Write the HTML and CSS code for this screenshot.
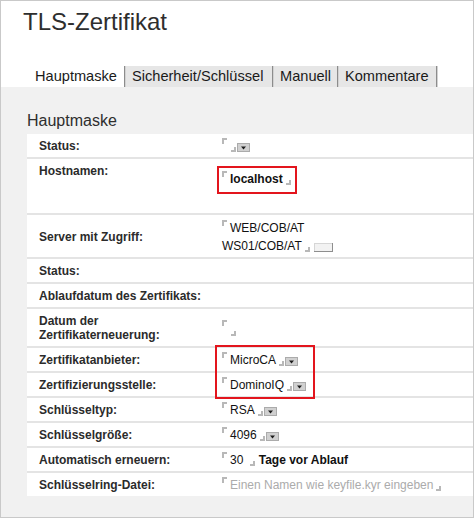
FILE: index.html
```html
<!DOCTYPE html>
<html lang="de">
<head>
<meta charset="utf-8">
<title>TLS-Zertifikat</title>
<link rel="stylesheet" href="styles.css">
</head>
<body>
<div class="window">
  <h1 class="title">TLS-Zertifikat</h1>
  <div class="tabs">
    <div class="tab tab-main active">Hauptmaske</div>
    <div class="tab tab-sec">Sicherheit/Schlüssel</div>
    <div class="tab tab-man">Manuell</div>
    <div class="tab tab-com">Kommentare</div>
  </div>
  <div class="panel">
    <h2 class="section">Hauptmaske</h2>
    <div class="form-wrap">
      <table class="form">
        <tr>
          <td class="label">Status:</td>
          <td class="value"><span class="field empty"><span class="tl"></span><span class="br"></span><svg class="dd" width="13" height="9" viewBox="0 0 13 9"><rect x="0.5" y="0.5" width="12" height="8" fill="#d0d0d0" stroke="#ababab"/><path d="M4 3.5h5l-2.5 3z" fill="#1a1a1a"/></svg></span></td>
        </tr>
        <tr class="row-host">
          <td class="label label-top">Hostnamen:</td>
          <td class="value value-host"><span class="mark"><span class="tl"></span><b>localhost</b><span class="br"></span></span></td>
        </tr>
        <tr class="row-server">
          <td class="label">Server mit Zugriff:</td>
          <td class="value value-multi">
            <div class="line"><span class="tl"></span>WEB/COB/AT</div>
            <div class="line">WS01/COB/AT<span class="br"></span><svg class="btn" width="19" height="9" viewBox="0 0 19 9"><rect x="0" y="0" width="19" height="9" fill="#f2f2f2"/><path d="M0 0.5h18.5M0.5 0v9" stroke="#d6d6d6"/><path d="M0 8.5h19M18.5 0v9" stroke="#8e8e8e"/></svg></div>
          </td>
        </tr>
        <tr>
          <td class="label">Status:</td>
          <td class="value"></td>
        </tr>
        <tr>
          <td class="label">Ablaufdatum des Zertifikats:</td>
          <td class="value"></td>
        </tr>
        <tr>
          <td class="label">Datum der<br>Zertifikaterneuerung:</td>
          <td class="value"><span class="field empty"><span class="tl"></span><span class="br br-low"></span></span></td>
        </tr>
        <tr>
          <td class="label">Zertifikatanbieter:</td>
          <td class="value"><span class="tl"></span>MicroCA<span class="br"></span><svg class="dd" width="13" height="9" viewBox="0 0 13 9"><rect x="0.5" y="0.5" width="12" height="8" fill="#d0d0d0" stroke="#ababab"/><path d="M4 3.5h5l-2.5 3z" fill="#1a1a1a"/></svg></td>
        </tr>
        <tr>
          <td class="label">Zertifizierungsstelle:</td>
          <td class="value"><span class="tl"></span>DominoIQ<span class="br"></span><svg class="dd" width="13" height="9" viewBox="0 0 13 9"><rect x="0.5" y="0.5" width="12" height="8" fill="#d0d0d0" stroke="#ababab"/><path d="M4 3.5h5l-2.5 3z" fill="#1a1a1a"/></svg></td>
        </tr>
        <tr>
          <td class="label">Schlüsseltyp:</td>
          <td class="value"><span class="tl"></span>RSA<span class="br"></span><svg class="dd" width="13" height="9" viewBox="0 0 13 9"><rect x="0.5" y="0.5" width="12" height="8" fill="#d0d0d0" stroke="#ababab"/><path d="M4 3.5h5l-2.5 3z" fill="#1a1a1a"/></svg></td>
        </tr>
        <tr>
          <td class="label">Schlüsselgröße:</td>
          <td class="value"><span class="tl"></span>4096<span class="br"></span><svg class="dd" width="13" height="9" viewBox="0 0 13 9"><rect x="0.5" y="0.5" width="12" height="8" fill="#d0d0d0" stroke="#ababab"/><path d="M4 3.5h5l-2.5 3z" fill="#1a1a1a"/></svg></td>
        </tr>
        <tr>
          <td class="label">Automatisch erneuern:</td>
          <td class="value"><span class="tl"></span><span class="num">30</span><span class="br"></span> <b>Tage vor Ablauf</b></td>
        </tr>
        <tr>
          <td class="label">Schlüsselring-Datei:</td>
          <td class="value"><span class="tl"></span><span class="placeholder">Einen Namen wie keyfile.kyr eingeben</span><span class="br"></span></td>
        </tr>
      </table>
      <div class="highlight highlight-ca"></div>
    </div>
  </div>
</div>
</body>
</html>
```

FILE: styles.css
```css
html, body {
  margin: 0;
  padding: 0;
  background: #fff;
}

.window {
  box-sizing: border-box;
  width: 474px;
  height: 518px;
  border: 1px solid #c9c9c9;
  display: flex;
  flex-direction: column;
  font-family: "Liberation Sans", Arial, sans-serif;
  color: #333;
  background: #fff;
}

.title {
  margin: 7px 0 0 22px;
  font-size: 24px;
  line-height: 28px;
  font-weight: normal;
  color: #2e2e2e;
}

.tabs {
  display: flex;
  margin: 30px 0 0 29px;
  height: 21px;
}

.tab {
  box-sizing: border-box;
  height: 21px;
  line-height: 21px;
  font-size: 14.6px;
  padding-left: 6px;
  background: #e6e6e6;
  border-right: 1px solid #8c8c8c;
  margin-right: 1px;
  box-shadow: 1px 0 0 #d2d2d2;
  color: #1a1a1a;
  white-space: nowrap;
}

.tab.active {
  background: #fff;
  padding-left: 5px;
}

.tab-main { width: 95px; }
.tab-sec { width: 147px; }
.tab-man { width: 64px; }
.tab-com { width: 98px; }

.panel {
  flex: 1;
  background: #f1f1f1;
  padding: 25px 0 0 26px;
}

.section {
  margin: 0;
  font-size: 16px;
  line-height: 18px;
  font-weight: normal;
  color: #2e2e2e;
}

.form-wrap {
  position: relative;
  margin-top: 4px;
}

.form {
  width: 100%;
  border-collapse: separate;
  border-spacing: 0;
  background: #fff;
  table-layout: fixed;
}

.form td {
  padding: 5px 0 4px 0;
  line-height: 14px;
  font-size: 12px;
  vertical-align: middle;
  border-bottom: 2px solid #e4e4e4;
  white-space: nowrap;
}

.form tr:last-child td {
  border-bottom: none;
}

.form td.label {
  width: 183px;
  padding-left: 12px;
  font-weight: bold;
  color: #2b2b2b;
  white-space: normal;
}

.form td.value {
  color: #111;
}

.form td.label-top {
  vertical-align: top;
}

.form td.value-host {
  vertical-align: top;
  padding: 7px 0 19px 0;
}

.form td.value-multi {
  padding: 4px 0 2px 0;
  line-height: 18px;
}

.tl {
  display: inline-block;
  width: 3px;
  height: 4px;
  border-top: 2px solid #b8b8b8;
  border-left: 2px solid #b8b8b8;
  vertical-align: 6px;
  margin: -3px 3px 0 0;
}

.br {
  display: inline-block;
  width: 3px;
  height: 3px;
  border-right: 2px solid #b8b8b8;
  border-bottom: 2px solid #b8b8b8;
  vertical-align: -2px;
  margin-left: 3px;
}

.field.empty .br {
  margin-left: 1px;
}

.br-low {
  vertical-align: -4px;
}

.dd {
  vertical-align: -2px;
  margin-left: 1px;
}

.btn {
  vertical-align: -2px;
  margin-left: 4px;
}

.num {
  display: inline-block;
  padding-right: 4px;
}

.placeholder {
  color: #ababab;
}

.mark {
  display: inline-block;
  vertical-align: top;
  margin-left: -5px;
  padding: 4px 4px 6px 3px;
  border: 2px solid #e3151d;
  line-height: 14px;
}

.highlight {
  position: absolute;
  box-sizing: border-box;
  border: 2px solid #e3151d;
  pointer-events: none;
}

.highlight-ca {
  left: 188px;
  top: 211px;
  width: 100px;
  height: 54px;
}
```
